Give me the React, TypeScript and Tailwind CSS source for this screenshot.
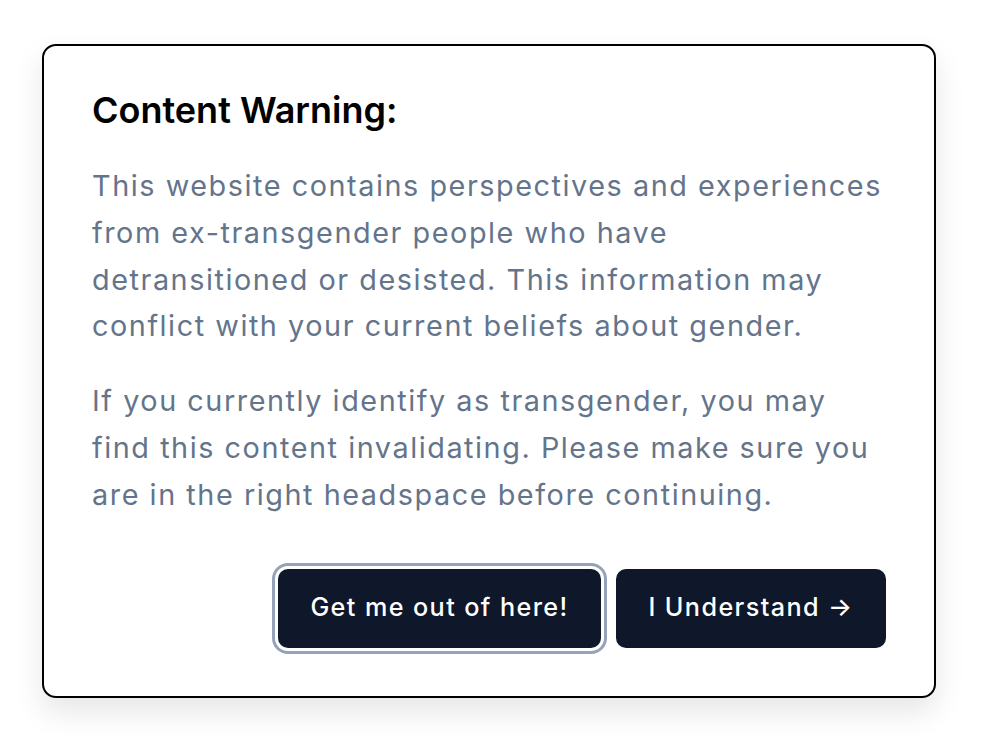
import React from 'react';

const App: React.FC = () => {
    return (
        <div
            className="min-h-screen bg-white pl-[42px] pt-[44px] [font-optical-sizing:none] [font-variation-settings:'opsz'_14]"
            style={{ fontFamily: 'Inter, "Noto Sans", sans-serif' }}
        >
            <div className="w-[894px] rounded-[14px] border-2 border-black bg-white px-[48px] pt-[42px] pb-[48px] shadow-[0_14px_30px_rgba(0,0,0,0.10)]">
                <h2 className="text-[36px] font-semibold leading-[44px] text-black">
                    Content Warning:
                </h2>
                <div className="mt-[31px] flex flex-col gap-[28px] text-[28.8px] leading-[46.8px] tracking-[1.55px] text-[#64748b]">
                    <p>
                        This website contains perspectives and experiences<br />
                        from ex-transgender people who have<br />
                        detransitioned or desisted. This information may<br />
                        conflict with your current beliefs about gender.
                    </p>
                    <p>
                        If you currently identify as transgender, you may<br />
                        find this content invalidating. Please make sure you<br />
                        are in the right headspace before continuing.
                    </p>
                </div>
                <div className="mt-[50px] flex justify-end gap-[15px]">
                    <button className="h-[79px] w-[323px] rounded-[10px] bg-[#0f172a] text-[25.2px] font-medium tracking-[1.4px] text-white ring-[3px] ring-[#94a3b8] ring-offset-[3px] ring-offset-white">
                        Get me out of here!
                    </button>
                    <button className="h-[79px] w-[270px] rounded-[10px] bg-[#0f172a] text-[25.2px] font-medium tracking-[1.4px] text-white">
                        I Understand →
                    </button>
                </div>
            </div>
        </div>
    );
};

export default App;
